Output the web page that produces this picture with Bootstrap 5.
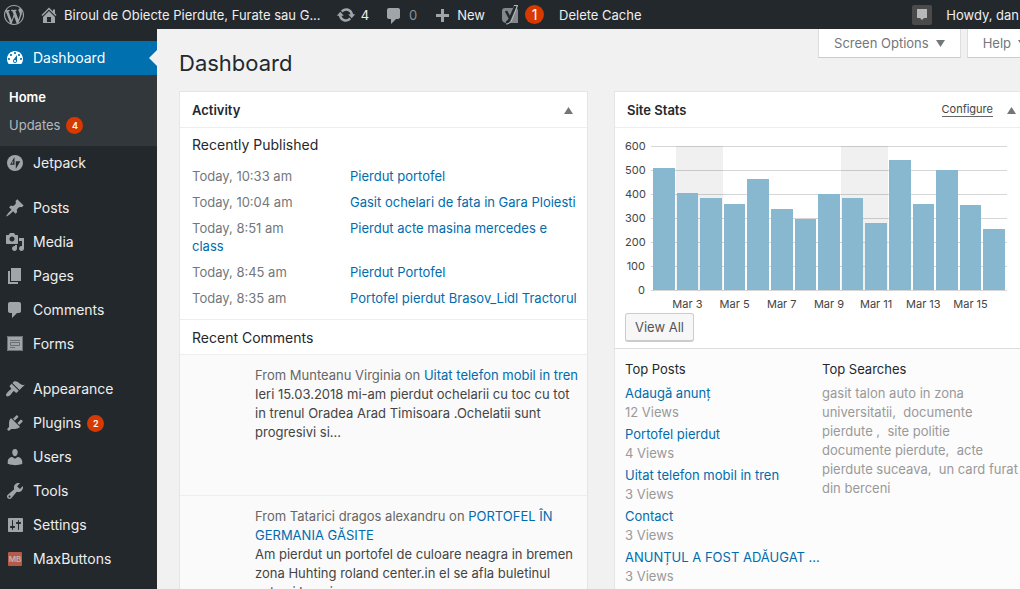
<!DOCTYPE html>
<html lang="en">
<head>
<meta charset="utf-8">
<meta name="viewport" content="width=device-width, initial-scale=1">
<title>Dashboard</title>
<link href="https://cdn.jsdelivr.net/npm/bootstrap@5.3.0/dist/css/bootstrap.min.css" rel="stylesheet">
<style>
body{font-family:Inter,"Liberation Sans",sans-serif;font-size:13px;line-height:18px;color:#444;background:#f1f1f1}
a{color:#006cad;text-decoration:none}
.ic{width:20px;height:20px;fill:#a0a5aa;flex:none}
.shell{min-width:1062px}
.topbar{height:29px;background:#23282d;padding-left:4px;padding-right:43px;gap:15px}
.topbar a{color:#eee;gap:5px}
.topbar .muted{color:#8b9095}
.topbar .account{gap:14px}
.count{background:#d63a00;color:#fff;border-radius:9px;font-size:9px;font-weight:600;line-height:17px;min-width:17px;text-align:center}
.count-lg{font-size:14px;font-weight:400;line-height:19px;min-width:19px;border-radius:10px}
.side{width:157px;background:#23282d;padding-top:12px}
.side a{color:#eee}
.side-link{height:34px;padding-left:5px;gap:8px;font-size:14px}
.side-link.current{background:#0070af;color:#fff;position:relative}
.side-link.current .ic{fill:#fff}
.side-link.current::after{content:"";position:absolute;right:0;top:9px;border:8px solid transparent;border-right-color:#f1f1f1;border-left:0}
.side-link .count{margin-left:-2px}
.sub{background:#32373c;padding:8px 9px 7px}
.side .sub a{height:28px;gap:6px;color:#b4b9be}
.side .sub a.here{color:#fff;font-weight:600}
.gap-top{margin-top:11px}
.main{padding:0 31px 0 22px}
.tabs{gap:6px;margin-right:-12px}
.tab{background:#fff;border:1px solid #ddd;border-top:0;border-bottom-color:#ccc;color:#72777c;height:29px;padding:0 15px;gap:7px;font-size:13px}
.tri{width:9px;height:7px;fill:#72777c;flex:none}
h1{font-size:22px;line-height:28px;font-weight:400;color:#23282d;margin:-9px 0 14px}
h2,h3{font-size:14px;line-height:19px;margin:0;color:#23282d}
h2{font-size:13px;font-weight:600}
h3{font-weight:400}
.boards{display:grid;grid-template-columns:409fr 417fr;gap:26px}
.box{background:#fff;border:1px solid #e5e5e5;min-width:0}
.box-head{height:36px;padding:1px 14px 0 12px;border-bottom:1px solid #eee}
.box-head button{border:0;background:none;padding:0;line-height:8px}
.config{color:#444;font-size:11px;line-height:13px;border-bottom:1px solid #666;margin-right:14px}
.recent{padding:7px 0 12px 12px}
.recent ul{margin:13px 0 0}
.recent li+li{margin-top:8px}
.recent time{display:inline-block;width:158px;color:#72777c}
.band{height:36px;padding:0 12px;border-top:1px solid #eee;border-bottom:1px solid #eee}
.note{background:#fafafa;min-height:141px;padding:11px 0 11px 75px;line-height:19px;border-bottom:1px solid #eee}
.note .by{color:#666}
.stats{padding:6px 23px 6px 10px}
.yaxis{width:20px;margin-right:6px;font-size:11px;line-height:24px;text-align:right}
.plot{height:145px;margin-top:12px;padding:0 1px;background:repeating-linear-gradient(to bottom,#d6d6d6 0 1px,transparent 1px 24px)}
.slot{flex:1 1 0;min-width:0}
.slot.weekend{background:rgba(0,0,0,.06)}
.bar{background:#87b8cf;margin:0 1px;border-bottom:1px solid #d6d6d6}
.xaxis{font-size:11px;line-height:18px;margin-top:4px;padding:0 1px}
.xaxis span{flex:1 1 0;min-width:0;display:flex;justify-content:center;white-space:nowrap}
.viewall{background:#f7f7f7;border:1px solid #ccc;border-bottom-width:2px;border-radius:3px;color:#555;height:29px;padding:0 9px;font-size:13px;line-height:16px}
.lists{background:#fcfcfc;border-top:1px solid #ddd;padding:11px 10px 4px;line-height:19px}
.lists h3{font-size:13px;line-height:18px;margin-bottom:6px}
.posts{width:197px;flex:none}
.posts li{margin-bottom:3px}
.gray{color:#999}
</style>
</head>
<body>
<div class="vh-100 overflow-hidden">
<div class="shell d-flex flex-column min-vh-100">
<header class="topbar d-flex align-items-center">
  <a href="#" aria-label="WordPress" class="d-flex"><svg class="ic" viewBox="0 0 20 20"><path d="M20 10c0-5.51-4.49-10-10-10C4.48 0 0 4.49 0 10c0 5.52 4.48 10 10 10 5.51 0 10-4.48 10-10zM7.78 15.37L4.37 6.22c.55-.02 1.17-.08 1.17-.08.5-.06.44-1.13-.06-1.11 0 0-1.45.11-2.37.11-.18 0-.37 0-.58-.01C4.12 2.69 6.87 1.11 10 1.11c2.33 0 4.45.87 6.05 2.34-.68-.11-1.65.39-1.65 1.58 0 .74.45 1.36.9 2.1.35.61.55 1.36.55 2.46 0 1.49-1.4 5-1.4 5l-3.03-8.37c.54-.02.82-.17.82-.17.5-.05.44-1.25-.06-1.22 0 0-1.44.12-2.38.12-.87 0-2.33-.12-2.33-.12-.5-.03-.56 1.2-.06 1.22l.92.08 1.26 3.41zM17.41 10c.24-.64.74-1.87.43-4.25.7 1.29 1.05 2.71 1.05 4.25 0 3.29-1.73 6.24-4.4 7.78.97-2.59 1.94-5.2 2.92-7.78zM6.1 18.09C3.12 16.65 1.11 13.53 1.11 10c0-1.3.23-2.48.72-3.59C3.25 10.3 4.67 14.2 6.1 18.09zm4.03-6.63l2.58 6.98c-.86.29-1.76.45-2.71.45-.79 0-1.57-.11-2.29-.33.81-2.38 1.62-4.74 2.42-7.1z"/></svg></a>
  <a href="#" class="d-flex align-items-center text-nowrap"><svg class="ic" viewBox="0 0 20 20"><path fill-rule="evenodd" d="M16 8.5l1.53 1.53-1.06 1.06L10 4.6l-6.47 6.49-1.06-1.06L10 2.5l4 4v-2h2v4zm-6-2.46l6 5.99V18H4v-5.97zM12 17v-5H8v5h4z"/></svg>Biroul de Obiecte Pierdute, Furate sau G...</a>
  <a href="#" class="d-flex align-items-center"><svg class="ic" viewBox="0 0 20 20"><path d="M10.2 3.28c3.53 0 6.43 2.61 6.92 6h2.08l-3.5 4-3.5-4h2.32c-.45-1.97-2.21-3.45-4.32-3.45-1.45 0-2.73.71-3.54 1.78L4.95 5.66C6.23 4.2 8.11 3.28 10.2 3.28zm-.4 13.44c-3.52 0-6.43-2.61-6.92-6H.8l3.5-4 3.5 4H5.48c.45 1.97 2.21 3.45 4.32 3.45 1.45 0 2.73-.71 3.54-1.78l1.71 1.95c-1.28 1.46-3.15 2.38-5.25 2.38z"/></svg>4</a>
  <a href="#" class="d-flex align-items-center muted"><svg class="ic" viewBox="0 0 20 20"><path d="M5 3h9c1.1 0 2 .9 2 2v7c0 1.1-.9 2-2 2h-2l-5 5v-5H5c-1.1 0-2-.9-2-2V5c0-1.1.9-2 2-2z"/></svg>0</a>
  <a href="#" class="d-flex align-items-center"><svg class="ic" viewBox="0 0 20 20"><path d="M9 4h3v5h5v3h-5v5H9v-5H4V9h5z"/></svg>New</a>
  <a href="#" class="d-flex align-items-center"><svg class="ic" viewBox="0 0 20 20"><path fill="#82878c" d="M5 3h8l1-3h4l-1 3 1 2v13H7q-5 0-5-4V6q0-3 3-3z"/><path fill="none" stroke="#23282d" stroke-width="2.500" d="M6 6l4 7.500M15.500 1L10 13.500q-1.500 4-4 4"/><path fill="none" stroke="#b4b9be" d="M14 .5h3.500L12 14.500q-1.500 4.500-6 4.500"/></svg><span class="count count-lg">1</span></a>
  <a href="#" class="text-nowrap">Delete Cache</a>
  <a href="#" class="account d-flex align-items-center ms-auto text-nowrap"><svg class="ic" viewBox="0 0 20 20"><rect width="20" height="20" rx="2" fill="#4b4b4b"/><path fill="#b8b8b8" d="M5 4h10v9h-3l-2 2-2-2H5z"/></svg>Howdy, dan</a>
</header>
<div class="d-flex flex-grow-1">
<nav class="side flex-shrink-0">
  <a href="#" class="side-link current d-flex align-items-center"><svg class="ic" viewBox="0 0 20 20"><path fill-rule="evenodd" d="M3.76 16h12.48c1.1-1.37 1.76-3.11 1.76-5 0-4.42-3.58-8-8-8s-8 3.58-8 8c0 1.89.66 3.63 1.76 5zM10 4c.55 0 1 .45 1 1s-.45 1-1 1-1-.45-1-1 .45-1 1-1zM6 6c.55 0 1 .45 1 1s-.45 1-1 1-1-.45-1-1 .45-1 1-1zm8 0c.55 0 1 .45 1 1s-.45 1-1 1-1-.45-1-1 .45-1 1-1zm-5.37 5.55L12 7v6c0 1.1-.9 2-2 2s-2-.9-2-2c0-.57.24-1.08.63-1.45zM4 10c.55 0 1 .45 1 1s-.45 1-1 1-1-.45-1-1 .45-1 1-1zm12 0c.55 0 1 .45 1 1s-.45 1-1 1-1-.45-1-1 .45-1 1-1zm-5 3c0-.55-.45-1-1-1s-1 .45-1 1 .45 1 1 1 1-.45 1-1z"/></svg>Dashboard</a>
  <div class="sub">
    <a href="#" class="here d-flex align-items-center">Home</a>
    <a href="#" class="d-flex align-items-center">Updates <span class="count">4</span></a>
  </div>
  <a href="#" class="side-link d-flex align-items-center"><svg class="ic" viewBox="0 0 20 20"><circle cx="10" cy="10" r="8"/><path fill="#23282d" d="M9.500 4v7.800H5zM10.800 16V8.200h4.500z"/><path d="M8.200 7.500v3H6.600z"/></svg>Jetpack</a>
  <a href="#" class="side-link gap-top d-flex align-items-center"><svg class="ic" viewBox="0 0 20 20"><path d="M10.440 3.020l1.820-1.820 6.360 6.350-1.830 1.820c-1.050-.68-2.480-.57-3.410.36l-.75.75c-.92.93-1.040 2.350-.35 3.410l-1.830 1.820-2.410-2.410-2.800 2.790c-.42.42-3.380 2.710-3.800 2.290s1.860-3.390 2.280-3.810l2.790-2.790L4.100 9.360l1.830-1.820c1.050.69 2.480.57 3.400-.36l.75-.75c.93-.92 1.050-2.350.36-3.410z"/></svg>Posts</a>
  <a href="#" class="side-link d-flex align-items-center"><svg class="ic" viewBox="0 0 20 20"><path fill-rule="evenodd" d="M13 11V4c0-.55-.45-1-1-1h-1.670L9 1H5L3.670 3H2c-.55 0-1 .45-1 1v7c0 .55.45 1 1 1h10c.55 0 1-.45 1-1zM7 4.500c1.380 0 2.500 1.120 2.500 2.500S8.380 9.500 7 9.500 4.500 8.380 4.500 7 5.620 4.500 7 4.500zM14 6h5v10.500c0 1.380-1.120 2.500-2.500 2.500S14 17.880 14 16.500s1.120-2.500 2.500-2.500c.17 0 .34.02.5.05V9h-3V6zm-4 8.050V13h2v3.500c0 1.380-1.120 2.500-2.500 2.500S7 17.880 7 16.500 8.120 14 9.500 14c.17 0 .34.02.5.05z"/></svg>Media</a>
  <a href="#" class="side-link d-flex align-items-center"><svg class="ic" viewBox="0 0 20 20"><path d="M6 15V2h10v13H6zm-1 1h8v2H3V5h2v11z"/></svg>Pages</a>
  <a href="#" class="side-link d-flex align-items-center"><svg class="ic" viewBox="0 0 20 20"><path d="M5 2h9c1.100 0 2 .9 2 2v7c0 1.100-.9 2-2 2h-2l-5 5v-5H5c-1.100 0-2-.9-2-2V4c0-1.100.9-2 2-2z"/></svg>Comments</a>
  <a href="#" class="side-link d-flex align-items-center"><svg class="ic" viewBox="0 0 20 20"><path d="M2 2h16v15H2z"/><path fill="none" stroke="#6b7075" d="M2.500 2.500h15v14h-15zM5 6.500h10M5.500 8.500h9v3h-9zM5 13.500h5"/></svg>Forms</a>
  <a href="#" class="side-link gap-top d-flex align-items-center"><svg class="ic" viewBox="0 0 20 20"><path d="M14.480 11.060L7.410 3.990l1.500-1.500c.5-.56 2.300-.47 3.510.32 1.210.8 1.430 1.280 2.910 2.100 1.180.64 2.450 1.260 4.450.85zm-.71.71L6.700 4.700 4.930 6.470c-.39.39-.39 1.020 0 1.410l1.060 1.060c.39.39.39 1.030 0 1.420-.6.6-1.430 1.110-2.210 1.690-.35.26-.7.53-1.010.84C1.430 14.230.4 16.080 1.400 17.070c.99 1 2.840-.03 4.180-1.360.31-.31.58-.66.85-1.020.57-.78 1.080-1.610 1.690-2.210.39-.39 1.020-.39 1.410 0l1.060 1.060c.39.39 1.020.39 1.410 0z"/></svg>Appearance</a>
  <a href="#" class="side-link d-flex align-items-center"><svg class="ic" viewBox="0 0 20 20"><path d="M13.110 4.360L9.870 7.600 8 5.730l3.240-3.240c.35-.34 1.050-.2 1.560.32.52.51.66 1.210.31 1.550zm-8 1.770l.91-1.120 9.010 9.010-1.190.84c-.71.71-2.630 1.160-3.820 1.160H6.140L4.900 17.260c-.59.59-1.540.59-2.120 0-.59-.58-.59-1.530 0-2.120l1.240-1.240v-3.880c0-1.130.4-3.190 1.090-3.890zm7.260 3.970l3.240-3.240c.34-.35 1.040-.21 1.550.31.52.51.66 1.210.31 1.550l-3.240 3.250z"/></svg>Plugins <span class="count">2</span></a>
  <a href="#" class="side-link d-flex align-items-center"><svg class="ic" viewBox="0 0 20 20"><path d="M10 9.250c-2.270 0-2.730-3.440-2.730-3.440C7 4.020 7.820 2 9.970 2c2.160 0 2.980 2.020 2.710 3.810 0 0-.41 3.440-2.680 3.440zm0 2.570L12.720 10c2.390 0 4.520 2.330 4.520 4.530v2.490s-3.650 1.130-7.240 1.130c-3.650 0-7.240-1.130-7.240-1.130v-2.490c0-2.250 1.940-4.480 4.470-4.480z"/></svg>Users</a>
  <a href="#" class="side-link d-flex align-items-center"><svg class="ic" viewBox="0 0 20 20"><path fill-rule="evenodd" d="M16.680 9.770c-1.340 1.340-3.300 1.670-4.950.99l-5.410 6.520c-.99.99-2.590.99-3.580 0s-.99-2.590 0-3.570l6.520-5.420c-.68-1.650-.35-3.610.99-4.950 1.280-1.280 3.120-1.620 4.720-1.060l-2.890 2.890 2.820 2.820 2.860-2.870c.53 1.580.18 3.390-1.080 4.650zM3.810 16.210c.4.39 1.040.39 1.430 0 .4-.4.4-1.040 0-1.430-.39-.4-1.030-.4-1.430 0-.39.39-.39 1.030 0 1.430z"/></svg>Tools</a>
  <a href="#" class="side-link d-flex align-items-center"><svg class="ic" viewBox="0 0 20 20"><path fill-rule="evenodd" d="M18 16V4c0-.55-.45-1-1-1H4c-.55 0-1 .45-1 1v12c0 .55.45 1 1 1h13c.55 0 1-.45 1-1zM8 11h1c.55 0 1 .45 1 1s-.45 1-1 1H8v1.500c0 .28-.22.5-.5.5s-.5-.22-.5-.5V13H6c-.55 0-1-.45-1-1s.45-1 1-1h1V5.500c0-.28.22-.5.5-.5s.5.220.5.5V11zm5-2h-1c-.55 0-1-.45-1-1s.45-1 1-1h1V5.500c0-.28.22-.5.5-.5s.5.220.5.5V7h1c.55 0 1 .45 1 1s-.45 1-1 1h-1v5.500c0 .28-.22.5-.5.5s-.5-.22-.5-.5V9z"/></svg>Settings</a>
  <a href="#" class="side-link d-flex align-items-center"><svg class="ic" viewBox="0 0 20 20"><rect x="3" y="3" width="14" height="14" rx="1" fill="#b35a48"/><text x="10" y="13" text-anchor="middle" font-size="8" font-weight="600" fill="#c4b4b0">MB</text></svg>MaxButtons</a>
</nav>
<main class="main flex-grow-1">
  <div class="tabs d-flex justify-content-end">
    <button class="tab d-flex align-items-center">Screen Options <svg class="tri" viewBox="0 0 9 7"><path d="M0 0h9L4.500 7z"/></svg></button>
    <button class="tab d-flex align-items-center">Help <svg class="tri" viewBox="0 0 9 7"><path d="M0 0h9L4.500 7z"/></svg></button>
  </div>
  <h1>Dashboard</h1>
  <div class="boards">
    <section class="box">
      <div class="box-head d-flex align-items-center justify-content-between"><h2>Activity</h2><button aria-label="Toggle Activity"><svg class="tri" viewBox="0 0 9 7"><path d="M4.500 0L9 7H0z"/></svg></button></div>
      <div class="recent">
        <h3>Recently Published</h3>
        <ul class="list-unstyled">
          <li><time>Today, 10:33 am</time><a href="#">Pierdut portofel</a></li>
          <li><time>Today, 10:04 am</time><a href="#">Gasit ochelari de fata in Gara Ploiesti</a></li>
          <li><time>Today, 8:51 am</time><a href="#">Pierdut acte masina mercedes e<br>class</a></li>
          <li><time>Today, 8:45 am</time><a href="#">Pierdut Portofel</a></li>
          <li><time>Today, 8:35 am</time><a href="#">Portofel pierdut Brasov_Lidl Tractorul</a></li>
        </ul>
      </div>
      <div class="band d-flex align-items-center"><h3>Recent Comments</h3></div>
      <article class="note">
        <div class="by">From Munteanu Virginia on <a href="#">Uitat telefon mobil in tren</a></div>
        Ieri 15.03.2018 mi-am pierdut ochelarii cu toc cu tot<br>in trenul Oradea Arad Timisoara .Ochelatii sunt<br>progresivi si...
      </article>
      <article class="note">
        <div class="by">From Tatarici dragos alexandru on <a href="#">PORTOFEL ÎN<br>GERMANIA GĂSITE</a></div>
        Am pierdut un portofel de culoare neagra in bremen<br>zona Huhting roland center.in el se afla buletinul<br>auto si banci
      </article>
    </section>
    <section class="box">
      <div class="box-head d-flex align-items-center"><h2 class="me-auto">Site Stats</h2><a href="#" class="config">Configure</a><button aria-label="Toggle Site Stats"><svg class="tri" viewBox="0 0 9 7"><path d="M4.500 0L9 7H0z"/></svg></button></div>
      <div class="stats">
        <div class="d-flex">
          <div class="yaxis"><div>600</div><div>500</div><div>400</div><div>300</div><div>200</div><div>100</div><div>0</div></div>
          <div class="flex-grow-1">
            <div class="plot d-flex">
              <div class="slot d-flex flex-column justify-content-end"><div class="bar" style="height:84.7%"></div></div>
              <div class="slot weekend d-flex flex-column justify-content-end"><div class="bar" style="height:67.7%"></div></div>
              <div class="slot weekend d-flex flex-column justify-content-end"><div class="bar" style="height:64%"></div></div>
              <div class="slot d-flex flex-column justify-content-end"><div class="bar" style="height:60.2%"></div></div>
              <div class="slot d-flex flex-column justify-content-end"><div class="bar" style="height:77.2%"></div></div>
              <div class="slot d-flex flex-column justify-content-end"><div class="bar" style="height:56.5%"></div></div>
              <div class="slot d-flex flex-column justify-content-end"><div class="bar" style="height:49.8%"></div></div>
              <div class="slot d-flex flex-column justify-content-end"><div class="bar" style="height:67.2%"></div></div>
              <div class="slot weekend d-flex flex-column justify-content-end"><div class="bar" style="height:64%"></div></div>
              <div class="slot weekend d-flex flex-column justify-content-end"><div class="bar" style="height:46.8%"></div></div>
              <div class="slot d-flex flex-column justify-content-end"><div class="bar" style="height:90.2%"></div></div>
              <div class="slot d-flex flex-column justify-content-end"><div class="bar" style="height:59.8%"></div></div>
              <div class="slot d-flex flex-column justify-content-end"><div class="bar" style="height:83.8%"></div></div>
              <div class="slot d-flex flex-column justify-content-end"><div class="bar" style="height:59.2%"></div></div>
              <div class="slot d-flex flex-column justify-content-end"><div class="bar" style="height:42.5%"></div></div>
            </div>
            <div class="xaxis d-flex"><span></span><span>Mar 3</span><span></span><span>Mar 5</span><span></span><span>Mar 7</span><span></span><span>Mar 9</span><span></span><span>Mar 11</span><span></span><span>Mar 13</span><span></span><span>Mar 15</span><span></span></div>
          </div>
        </div>
        <button class="viewall">View All</button>
      </div>
      <div class="lists d-flex">
        <div class="posts">
          <h3>Top Posts</h3>
          <ul class="list-unstyled mb-0 gray">
            <li><a href="#">Adaugă anunț</a><br>12 Views</li>
            <li><a href="#">Portofel pierdut</a><br>4 Views</li>
            <li><a href="#">Uitat telefon mobil in tren</a><br>3 Views</li>
            <li><a href="#">Contact</a><br>3 Views</li>
            <li><a href="#">ANUNȚUL A FOST ADĂUGAT ...</a><br>3 Views</li>
          </ul>
        </div>
        <div>
          <h3>Top Searches</h3>
          <div class="gray text-nowrap">gasit talon auto in zona<br>universitatii,&nbsp; documente<br>pierdute ,&nbsp; site politie<br>documente pierdute,&nbsp; acte<br>pierdute suceava,&nbsp; un card furat<br>din berceni</div>
        </div>
      </div>
    </section>
  </div>
</main>
</div>
</div>
</div>
<script src="https://cdn.jsdelivr.net/npm/bootstrap@5.3.0/dist/js/bootstrap.bundle.min.js"></script>
</body>
</html>
